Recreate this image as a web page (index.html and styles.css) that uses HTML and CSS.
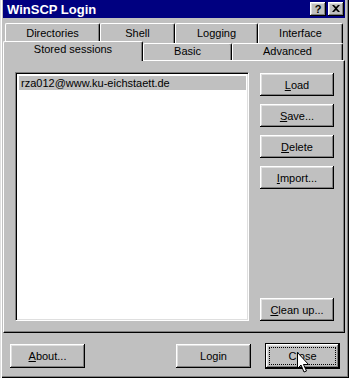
FILE: index.html
```html
<!DOCTYPE html>
<html lang="en">
<head>
  <meta charset="UTF-8">
  <title>WinSCP Login</title>
  <link rel="stylesheet" href="styles.css">
</head>
<body>
  <div class="window">
    <!-- Title bar -->
    <div class="titlebar">
      <span class="title">WinSCP Login</span>
      <div class="title-buttons">
        <button class="tbtn help">?</button>
        <button class="tbtn">
          <svg width="8" height="7" viewBox="0 0 8 7"><path d="M0 0h2l2 2 2-2h2L5 3.5 8 7H6L4 5 2 7H0l3-3.5z" fill="#000"/></svg>
        </button>
      </div>
    </div>

    <!-- Tabs -->
    <div class="tabs">
      <div class="tab-row back">
        <div class="tab w-dir">Directories</div>
        <div class="tab w-shell">Shell</div>
        <div class="tab w-log">Logging</div>
        <div class="tab w-int">Interface</div>
      </div>
      <div class="tab-row front">
        <div class="tab selected w-stored">Stored sessions</div>
        <div class="tab w-basic">Basic</div>
        <div class="tab w-adv">Advanced</div>
      </div>
    </div>

    <!-- Tab page -->
    <div class="panel">
      <div class="listbox">
        <div class="item selected">rza012@www.ku-eichstaett.de</div>
      </div>
      <div class="side-buttons">
        <button class="btn"><u>L</u>oad</button>
        <button class="btn"><u>S</u>ave...</button>
        <button class="btn"><u>D</u>elete</button>
        <button class="btn"><u>I</u>mport...</button>
        <button class="btn cleanup"><u>C</u>lean up...</button>
      </div>
    </div>

    <!-- Dialog buttons -->
    <div class="footer">
      <button class="btn"><u>A</u>bout...</button>
      <div class="grow"></div>
      <button class="btn">Login</button>
      <button class="btn default"><span class="focus">Close</span></button>
    </div>

    <svg class="cursor" width="13" height="22" viewBox="0 0 13 22">
      <path d="M0.5 0.5v16l3.5-3.5 3 7 2.5-1-3-6.5h5z" fill="#fff" stroke="#000" stroke-width="1"/>
    </svg>
  </div>
</body>
</html>
```

FILE: styles.css
```css
* {
    margin: 0;
    padding: 0;
    box-sizing: border-box;
}

body {
    background-color: #c0c0c0;
    font-family: "Liberation Sans", Arial, sans-serif;
    font-size: 11px;
    color: #000;
}

/* Window frame */
.window {
    position: relative;
    width: 349px;
    height: 378px;
    padding: 0 4px 0 3px;
    background-color: #c0c0c0;
    box-shadow: inset 1px 0 #dfdfdf, inset 2px 0 #fff,
                inset -1px -1px #000, inset -2px -2px #808080;
}

.titlebar {
    height: 18px;
    background-color: #000080;
    display: flex;
    align-items: center;
    justify-content: space-between;
    padding: 0 1px 0 4px;
}

.title {
    color: #fff;
    font-weight: bold;
    font-size: 13px;
}

.title-buttons {
    display: flex;
    gap: 2px;
}

.tbtn {
    width: 16px;
    height: 14px;
    border: none;
    background-color: #c0c0c0;
    box-shadow: inset -1px -1px #000, inset 1px 1px #fff,
                inset -2px -2px #808080, inset 2px 2px #dfdfdf;
    display: flex;
    align-items: center;
    justify-content: center;
    font-family: "Liberation Sans", Arial, sans-serif;
    font-weight: bold;
    font-size: 11px;
    padding: 0 0 1px 0;
}

/* Tabs */
.tabs {
    margin-top: 5px;
}

.tab-row {
    display: flex;
    align-items: flex-start;
}

.tab-row.back {
    height: 20px;
    padding-left: 2px;
}

.tab-row.front {
    height: 19px;
    margin-top: -2px;
}

.tab {
    height: 20px;
    background-color: #c0c0c0;
    border-top: 1px solid #fff;
    border-left: 1px solid #fff;
    border-right: 1px solid #000;
    border-radius: 2px 2px 0 0;
    box-shadow: inset -1px 0 #808080;
    text-align: center;
    line-height: 13px;
    padding-top: 3px;
}

.front .tab {
    height: 17px;
    margin-top: 2px;
    padding-top: 1px;
}

.front .tab.selected {
    position: relative;
    z-index: 2;
    height: 20px;
    margin-top: 0;
    padding-top: 1px;
}

.w-dir { width: 95px; }
.w-shell { width: 75px; }
.w-log { width: 83px; }
.w-int { width: 85px; }
.w-stored { width: 140px; }
.w-basic { width: 89px; }
.w-adv { width: 111px; }

/* Tab page */
.panel {
    height: 273px;
    width: 342px;
    display: flex;
    gap: 11px;
    padding: 11px 10px 11px 11px;
    border-top: 1px solid #fff;
    border-left: 1px solid #fff;
    border-right: 1px solid #000;
    border-bottom: 1px solid #000;
    box-shadow: inset -1px -1px #808080;
}

.listbox {
    width: 234px;
    background-color: #fff;
    border-top: 1px solid #808080;
    border-left: 1px solid #808080;
    border-right: 1px solid #fff;
    border-bottom: 1px solid #fff;
    box-shadow: inset 1px 1px #000, inset -1px -1px #dfdfdf;
    padding: 3px 2px 2px 3px;
}

.item {
    height: 14px;
    line-height: 14px;
    padding-left: 2px;
}

.item.selected {
    background-color: #c0c0c0;
}

.side-buttons {
    width: 74px;
    display: flex;
    flex-direction: column;
    gap: 8px;
    padding-top: 1px;
}

.side-buttons .cleanup {
    margin-top: auto;
}

/* Buttons */
.btn {
    height: 23px;
    border: none;
    background-color: #c0c0c0;
    box-shadow: inset -1px -1px #000, inset 1px 1px #fff,
                inset -2px -2px #808080, inset 2px 2px #dfdfdf;
    font-family: "Liberation Sans", Arial, sans-serif;
    font-size: 11px;
    color: #000;
}

.footer {
    display: flex;
    padding: 11px 5px 0 7px;
}

.footer .btn {
    width: 75px;
    height: 24px;
}

.footer .grow {
    flex: 1;
}

.footer .btn + .btn {
    margin-left: 14px;
}

.btn.default {
    height: 26px;
    margin-top: -1px;
    border: 1px solid #000;
    display: flex;
    padding: 3px;
}

.focus {
    flex: 1;
    border: 1px dotted #000;
    display: flex;
    align-items: center;
    justify-content: center;
}

.cursor {
    position: absolute;
    left: 297px;
    top: 352px;
}
```
